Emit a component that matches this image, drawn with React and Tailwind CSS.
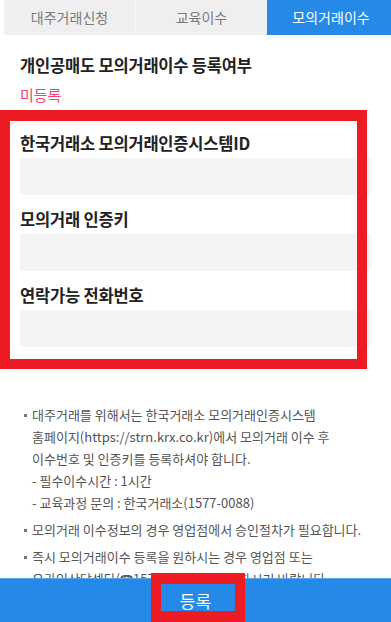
import React from "react";

const font = { fontFamily: '"Noto Sans CJK KR", "Noto Sans", sans-serif' };

function Field({ label, first }) {
  return (
    <div className={first ? "" : "mt-[13px]"}>
      <div className="h-[22px] leading-[22px] text-[16.5px] font-bold text-[#222] tracking-[-0.2px]">{label}</div>
      <div className="mt-[4px] h-[37px] bg-[#f4f4f4] rounded-[2px]" />
    </div>
  );
}

function Note({ children, className = "" }) {
  return (
    <div className={"relative pl-[12px] " + className}>
      <span className="absolute left-[4px] top-[10px] w-[3px] h-[3px] bg-[#777]" />
      {children}
    </div>
  );
}

export default function App() {
  return (
    <div className="relative w-[391px] h-[622px] overflow-hidden bg-white" style={font}>
      {/* tabs */}
      <div className="flex h-[35px] pl-[4px]">
        <div className="w-[131px] bg-[#efefef] flex items-center justify-center text-[14px] text-[#7a7a7a]">대주거래신청</div>
        <div className="w-[132px] bg-[#efefef] border-l border-[#f6f6f6] flex items-center justify-center text-[14px] text-[#7a7a7a]">교육이수</div>
        <div className="flex-1 bg-[#2589e8] flex items-center justify-center text-[14px] text-white pl-[4px]">모의거래이수</div>
      </div>

      <div className="px-[20px]">
        <div className="mt-[19px] h-[22px] leading-[22px] text-[16.5px] font-bold text-[#222] tracking-[-0.2px]">개인공매도 모의거래이수 등록여부</div>
        <div className="mt-[8px] h-[22px] leading-[22px] text-[15px] text-[#f0447a]">미등록</div>

        <div className="mt-[26px]">
          <Field first label="한국거래소 모의거래인증시스템ID" />
          <Field label="모의거래 인증키" />
          <Field label="연락가능 전화번호" />
        </div>

        <div className="mt-[57px] text-[13px] leading-[22px] text-[#555] pr-[4px] break-keep">
          <Note>
            대주거래를 위해서는 한국거래소 모의거래인증시스템 <span className="whitespace-nowrap">홈페이지(https://strn.krx.co.kr)에서</span> 모의거래 이수 후 이수번호 및 인증키를 등록하셔야 합니다.
            <div>- 필수이수시간 : 1시간</div>
            <div>- 교육과정 문의 : 한국거래소(1577-0088)</div>
          </Note>
          <Note className="mt-[5px]">모의거래 이수정보의 경우 영업점에서 승인절차가 필요합니다.</Note>
          <Note className="mt-[5px]">즉시 모의거래이수 등록을 원하시는 경우 영업점 또는 <span className="whitespace-nowrap">온라인상담센타(☎1577-4100)로</span> 문의하시기 바랍니다.</Note>
        </div>
      </div>

      {/* bottom button */}
      <div className="absolute left-0 right-0 bottom-0 h-[44px] bg-[#2589e8] border-t border-[#5aa6ee] flex items-center justify-center text-white text-[17px]">
        등록
      </div>

      {/* annotation overlays */}
      <div className="absolute left-0 top-[110px] w-[367px] h-[259px] border-[10px] border-t-[11px] border-[#ed1c24]" />
      <div className="absolute left-[151px] top-[573px] w-[94px] h-[49px] border-[10px] border-y-[11px] border-[#ed1c24]" />
    </div>
  );
}
